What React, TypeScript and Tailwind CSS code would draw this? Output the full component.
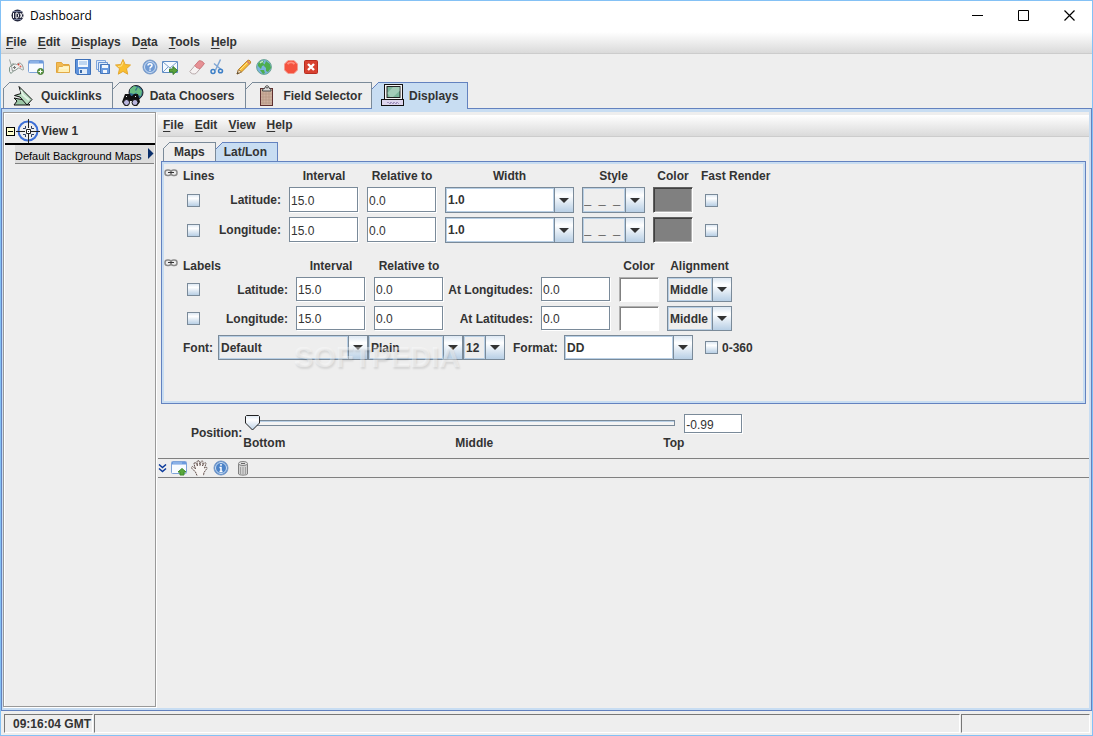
import { useState, type ReactNode } from 'react'
import clsx from 'clsx'

const font = "font-['Liberation_Sans',Arial,sans-serif]"

/* Menus */

function MenuBar({ items }: { items: [string, number][] }) {
  return (
    <nav className="flex h-[22px] items-center gap-[11px] border-b border-[#cccccc] bg-linear-to-b from-white to-[#dadada] px-[5px] pb-[2px]">
      {items.map(([label, key]) => (
        <button key={label} type="button" className="leading-4">
          {label.slice(0, key)}
          <span className="underline underline-offset-2">{label[key]}</span>
          {label.slice(key + 1)}
        </button>
      ))}
    </nav>
  )
}

/* Tabs */

interface TabProps {
  label: string
  selected?: boolean
  icon?: ReactNode
  className?: string
  onClick?: () => void
}

function Tab({ label, selected, icon, className, onClick }: TabProps) {
  return (
    <button
      type="button"
      role="tab"
      aria-selected={!!selected}
      onClick={onClick}
      className={clsx(
        'relative flex items-center border-t border-r first:border-l [&:first-child>svg:first-child]:-left-px',
        selected ? '-mb-px border-[#6382bf] bg-[#c8ddf2] pb-px' : 'border-[#7a8a99] bg-[#eeeeee]',
        className,
      )}
    >
      <svg className="absolute -top-px left-0" width="7" height="7" viewBox="0 0 7 7">
        <path d="M0 0H7L0 7Z" fill="#eeeeee" />
        <path d="M0 7L7 0" stroke={selected ? '#6382bf' : '#7a8a99'} />
      </svg>
      {icon}
      {label}
    </button>
  )
}

/* Form controls */

function Field({ label, value, className = 'w-[69px] h-[calc(100%-1px)]' }: { label: string; value: string; className?: string }) {
  return (
    <input
      aria-label={label}
      defaultValue={value}
      className={clsx(
        'self-start border border-[#7a8a99] bg-white px-px pt-[2px] font-normal text-[#333333] shadow-[1px_1px_0_#ffffff] outline-none',
        className,
      )}
    />
  )
}

interface ComboProps {
  label: string
  value: string
  className?: string
  white?: boolean
  dashes?: boolean
}

function Combo({ label, value, className, white, dashes }: ComboProps) {
  return (
    <div className={clsx('flex h-full border border-[#7a8a99]', white ? 'bg-white' : 'bg-[#eeeeee]', className)}>
      <select
        aria-label={label}
        className={clsx(
          'min-w-0 flex-1 appearance-none border border-[#b8cfe5] outline-none',
          dashes ? 'text-[13px] text-black' : 'pl-px',
        )}
        defaultValue={value}
      >
        <option>{value}</option>
      </select>
      <span className="pointer-events-none flex w-[19px] items-center justify-center border-l border-[#7a8a99] bg-linear-to-b from-[#dde8f3] via-white via-30% to-[#b8cfe5]">
        <svg width="10" height="5" viewBox="0 0 10 5">
          <path d="M0 0H10L5 5Z" fill="#333333" />
        </svg>
      </span>
    </div>
  )
}

function Check({ label }: { label: string }) {
  return (
    <input
      type="checkbox"
      aria-label={label}
      className="h-[13px] w-[13px] appearance-none border border-[#7a8a99] bg-linear-to-b from-[#dde8f3] via-white via-30% to-[#b8cfe5] checked:bg-[#6382bf]"
    />
  )
}

function Swatch({ label, dark }: { label: string; dark?: boolean }) {
  return (
    <button
      type="button"
      aria-label={label}
      className={clsx(
        'h-full w-10 border',
        dark
          ? 'border-t-[#606060] border-l-[#606060] border-r-white border-b-white bg-[#808080] shadow-[inset_1px_1px_0_#404040,inset_-1px_-1px_0_#b0b0b0]'
          : 'border-t-[#b0b0b0] border-l-[#b0b0b0] border-r-white border-b-white bg-white shadow-[inset_1px_1px_0_#808080]',
      )}
    />
  )
}

/* Icons */

function Icon({ children, size = 16 }: { children: ReactNode; size?: number }) {
  return (
    <svg className="shrink-0" width={size} height={size} viewBox={`0 0 ${size} ${size}`} fill="none">
      {children}
    </svg>
  )
}

const AppLogo = () => (
  <Icon size={13}>
    <circle cx="6.5" cy="6.5" r="6" fill="#25283d" />
    <path d="M2 2.500h9M2.500 10.500h8" stroke="#6f7896" />
    <path d="M2.500 4v5M5 4v5h1.500l1-1.500v-2L6.500 4ZM9 4l2.500 5M11.500 4L9 9" stroke="#fff" />
  </Icon>
)

const BrushIcon = () => (
  <Icon>
    <path d="M1.500.5l2 6.500" stroke="#9aa39f" />
    <path d="M5.500 4L1.500 8.500v4L3 14.500l3-3" stroke="#7d9487" />
    <path d="M3.500 7.500C5 5 7 4.500 8.500 5.500L11 4c3 0 4 3 4.500 6.500-1 1.500-3-1.500-5-1.500L7 11.500 4.500 12C3.800 10 4 9 3.500 7.500Z" stroke="#8f9894" fill="#edf0ee" />
    <path d="M6.500 7v3M5 8.500h3" stroke="#777" />
    <circle cx="10.500" cy="5.500" r="1" fill="#d94337" />
    <circle cx="12.500" cy="7.500" r="1" fill="#e16257" />
  </Icon>
)

const WindowIcon = ({ arrow }: { arrow?: boolean }) => (
  <Icon>
    <rect x=".5" y="1.500" width="15" height="12" rx="1" fill="#f7fbff" stroke="#7ea3d8" />
    <path d="M1 2h14v2.500H1z" fill="#6b9ade" />
    <path d="M2 3h9" stroke="#a9c8f0" />
    {arrow ? (
      <path d="M11 8.500l4 3.500h-2v3H9v-3H7Z" fill="#58a83b" stroke="#3c8a2b" />
    ) : (
      <>
        <circle cx="12.500" cy="12.500" r="3" fill="#5d9a43" stroke="#4b7d3b" />
        <path d="M12.500 10.500v4M10.500 12.500h4" stroke="#fff" />
      </>
    )}
  </Icon>
)

const FolderIcon = () => (
  <Icon>
    <path d="M1.500 13.500v-10h5l1.500 2h6v8Z" fill="#f3ba52" stroke="#e2a53b" />
    <path d="M3.500 7.500h4l1-1h6v7h-12Z" fill="#fff0b5" stroke="#e2aa47" />
    <path d="M4.500 9h9" stroke="#fff9dc" />
  </Icon>
)

const SaveIcon = () => (
  <Icon>
    <path d="M.5.5h15v15H2L.5 14Z" fill="#5f93dc" stroke="#3d70b8" />
    <path d="M3 1h10v7H3z" fill="#f4f8fd" />
    <path d="M4 3h8M4 5h8" stroke="#8bb4e4" />
    <path d="M4 10h8v5H4z" fill="#e1ecf8" />
    <path d="M5 11h2v3H5z" fill="#3969a8" />
  </Icon>
)

const SaveAllIcon = () => (
  <Icon>
    <path d="M1.500 1.500h9v9h-9z" fill="#dceafb" stroke="#7fa6dd" />
    <path d="M3.500 3.500h9v9h-9z" fill="#dceafb" stroke="#6a95d2" />
    <path d="M5.500 5.500h9v9h-9z" fill="#6a9bdf" stroke="#4577bc" />
    <path d="M7 6h6v3H7zM8 11h4v3H8z" fill="#f2f7fd" />
  </Icon>
)

const StarIcon = () => (
  <Icon>
    <path d="M8 .5l2.200 5 5.300.5-4 3.700 1.200 5.500L8 12.400l-4.700 2.800 1.200-5.500L.5 6l5.300-.5Z" fill="#f9bf30" stroke="#e3a733" />
    <path d="M8 3L6.500 7l-3.500.500" stroke="#ffe28a" />
  </Icon>
)

const RoundIcon = ({ kind }: { kind: 'help' | 'info' }) => (
  <Icon>
    <circle cx="8" cy="8" r="7" fill={kind === 'help' ? '#6f9ad4' : '#4c83c8'} stroke="#7c9cc8" />
    <circle cx="8" cy="8" r="5.500" stroke="#d0e0f3" />
    {kind === 'help' ? (
      <path d="M6 6.500C6 4 10 4.200 10 6.300 10 8 8 7.800 8 9.500M8 10.500v1.300" stroke="#fff" strokeWidth="1.500" />
    ) : (
      <path d="M8 4v1.700M6.500 7.500H8v4M6.500 11.500h3" stroke="#fff" strokeWidth="1.500" />
    )}
  </Icon>
)

const MailIcon = () => (
  <Icon>
    <path d="M.5 2.500h15v11H.5z" fill="#f5faff" stroke="#5f8cc4" />
    <path d="M1 3l7 6 7-6M1 13l5-5M15 13l-5-5" stroke="#7ba0cc" />
    <path d="M7.500 10h3.500V7.500l4.500 4-4.500 4V13H7.500Z" fill="#5aa23c" stroke="#3b812a" />
  </Icon>
)

const EraserIcon = () => (
  <Icon>
    <path d="M.8 12.500L9.500 2.300c1-1.200 5 .3 5.700 2.500L7 14.500c-2 1-5 .5-6.200-2Z" fill="#f6f2f2" stroke="#b7a9aa" />
    <path d="M5.800 6.600L9.500 2.300c1-1.200 5 .3 5.700 2.500L11 9.700C9 9.500 7 8.500 5.800 6.600Z" fill="#e69195" stroke="#d2797e" />
  </Icon>
)

const ScissorsIcon = () => (
  <Icon>
    <path d="M11.500.5L6.500 11M5 4.500l7 6" stroke="#7fa6d4" strokeWidth="1.500" />
    <circle cx="4" cy="12.500" r="2" stroke="#3c7fc7" strokeWidth="1.500" />
    <ellipse cx="11.500" cy="12" rx="2" ry="1.800" stroke="#3c7fc7" strokeWidth="1.500" />
  </Icon>
)

const PencilIcon = () => (
  <Icon>
    <path d="M1 15l1.500-4.500L11.800 1.300c1.500-.8 3.500 1.200 2.700 2.700L5.500 13Z" fill="#f8bc35" stroke="#bd852b" />
    <path d="M4 11L12 3" stroke="#ffe38c" />
    <path d="M2.500 10.500L5.500 13 1 15Z" fill="#f4e1bf" stroke="#9e7b4c" />
    <path d="M1 15l.700-2 1.300 1.200Z" fill="#333" />
    <path d="M11 2l3 3" stroke="#ce7970" strokeWidth="1.500" />
  </Icon>
)

const GlobeIcon = () => (
  <Icon>
    <circle cx="8" cy="8" r="7.400" fill="#7ab3de" stroke="#6aa593" />
    <path d="M2 5c1-3 5-4 6-3L7 4l2 2-3 1-1 3-3-3ZM10 2l4 3 1 4-3 4-2-1V9L8 7ZM4 11l4 0 1 3-2 1Z" fill="#4dae4d" />
    <path d="M4 4c1-1 2-1.500 3-1.500" stroke="#c4e9c8" strokeWidth="1.500" />
  </Icon>
)

const StopIcon = () => (
  <Icon>
    <path d="M5 1.500h6L14.500 5v6L11 14.500H5L1.500 11V5Z" fill="#f4523e" stroke="#f39a8e" />
    <path d="M4.500 5c2-2 5-2 7 0" stroke="#ff8d7c" strokeWidth="2" />
  </Icon>
)

const ExitIcon = () => (
  <Icon>
    <rect x="1.500" y="1.500" width="13" height="13" rx="1" fill="#d84130" stroke="#b72d20" />
    <path d="M5 5l6 6M11 5l-6 6" stroke="#fff" strokeWidth="2.400" />
  </Icon>
)

const ChainIcon = () => (
  <svg width="14" height="8" viewBox="0 0 14 8" fill="none">
    <rect x="1" y="1" width="6" height="5.500" rx="2.500" stroke="#8a8a8a" strokeWidth="1.500" />
    <rect x="7" y="1" width="6" height="5.500" rx="2.500" stroke="#8a8a8a" strokeWidth="1.500" />
    <path d="M4 3.500h6" stroke="#333" />
  </svg>
)

const QuicklinksIcon = () => (
  <svg width="20" height="22" viewBox="0 0 20 22">
    <path d="M1 20l3-4-3-3 10 2 6 5Z" fill="#9bc6a5" stroke="#111" />
    <path d="M6 1.500L19 14.500 14 20 7 12 1.500 10.500 8 8.500Z" fill="#b8dcc0" stroke="#111" />
    <path d="M8 5l2 5 6 5" fill="none" stroke="#e4f3e7" strokeWidth="2" />
  </svg>
)

const BinocularsIcon = () => (
  <svg width="22" height="22" viewBox="0 0 22 22">
    <circle cx="14" cy="7.500" r="7" fill="#2f6a8f" stroke="#222" />
    <path d="M8 4l4-3 3 1-2 3 2 2-3 2-4-1ZM16 2l4 4-1 5-4-1-1-4Z" fill="#69bd82" />
    <path d="M3 9h5l1 2h1l2-2h4l2 8-3 4h-3l-2-5h-2l-2 5H3l-3-4Z" fill="#111" />
    <circle cx="4.500" cy="17.500" r="3" fill="#bbb7df" stroke="#111" />
    <circle cx="13" cy="17.500" r="3" fill="#bbb7df" stroke="#111" />
    <path d="M4 11l1 1M13 11l1 1" stroke="#eee" />
  </svg>
)

const ClipboardIcon = () => (
  <svg width="14" height="22" viewBox="0 0 14 22">
    <rect x=".5" y="3.500" width="12" height="17" fill="#cdb09e" stroke="#5f3030" />
    <path d="M3 7v12M6 7v12M9 7v12M1 9h11M1 12h11M1 15h11M1 18h11" stroke="#b39381" strokeWidth=".600" />
    <path d="M2.500 6V4.500L5 3c0-3 4-3 4 0l2 1.500V6Z" fill="#ddd" stroke="#444" />
    <circle cx="7" cy="2.700" r=".8" fill="#333" />
  </svg>
)

const ComputerIcon = () => (
  <svg width="24" height="23" viewBox="0 0 24 23">
    <rect x="3.500" y=".5" width="18" height="15" fill="#f4f4f4" stroke="#111" />
    <rect x="6" y="2.500" width="13" height="11" fill="#7db79c" stroke="#222" />
    <path d="M6.500 9L12 3h6.500v4L12 13H9Z" fill="#a3cdb8" />
    <rect x=".5" y="15.500" width="22" height="6" fill="#ddd6ee" stroke="#111" />
    <path d="M6 18.500h11M8 19.500h10" stroke="#a295c0" strokeDasharray="2 1" />
  </svg>
)

const TargetIcon = () => (
  <svg className="ml-px" width="24" height="24" viewBox="0 0 24 24" fill="none">
    <circle cx="12" cy="12" r="9.500" stroke="#3d6fd6" strokeWidth="2" />
    <path d="M12.500 0v9M12.500 15v9M0 12.500h9M15 12.500h9" stroke="#222" />
    <path d="M7 9.500h2.500V7M15.500 7v2.500H18M18 15.500h-2.500V18M9.500 18v-2.500H7" stroke="#2c3f66" />
    <path d="M10.500 10.500h4v4h-4z" fill="#fff" stroke="#222" />
    <path d="M12 12h1v1h-1z" fill="#222" />
  </svg>
)

const HandIcon = () => (
  <svg width="17" height="16" viewBox="0 0 17 16" fill="none">
    <path
      d="M6 15.500L4.500 12 .7 8.200C0 6.500 2 6 3 7.500L4.500 9 3 4c0-2 2-2 2.300-.3L6.500 6 6 2c.300-2 2-2 2.400 0L9 5.500 10 1.800c.5-1.500 2.300-1 2 .700L11.500 6l1.500-2.800c1-1.200 2.500-.3 1.800 1L13.500 8l1-.5c1.500-.5 2 .5 1 1.500L13 12.500l-.5 3"
      fill="#f8f5f3"
      stroke="#62504c"
      strokeDasharray="2 .500"
    />
  </svg>
)

const TrashIcon = () => (
  <Icon>
    <path d="M3.500 4v10c1 1.500 8 1.500 9 0V4" fill="#d0d0d0" stroke="#808080" />
    <ellipse cx="8" cy="3.500" rx="4.500" ry="2" fill="#e5e5e5" stroke="#808080" />
    <path d="M5.500 7v7M8 7v7M10.500 7v7" stroke="#a0a0a0" />
    <path d="M6 3.500h4" stroke="#666" />
  </Icon>
)

const toolGroups: [string, () => ReactNode][][] = [
  [['Dashboard', BrushIcon], ['New view', WindowIcon]],
  [['Open', FolderIcon], ['Save', SaveIcon], ['Save as', SaveAllIcon], ['Favorites', StarIcon]],
  [['Help', () => <RoundIcon kind="help" />], ['Support', MailIcon]],
  [['Remove all', EraserIcon], ['Cut', ScissorsIcon]],
  [['Edit', PencilIcon], ['Globe', GlobeIcon]],
  [['Stop', StopIcon], ['Exit', ExitIcon]],
]

const mainTabs = [
  { label: 'Quicklinks', icon: <QuicklinksIcon />, className: 'gap-2 pl-[9px] pr-[10px]' },
  { label: 'Data Choosers', icon: <BinocularsIcon />, className: 'gap-[6px] pl-[9px] pr-[11px]' },
  { label: 'Field Selector', icon: <ClipboardIcon />, className: 'gap-[9px] pl-[14px] pr-[9px]' },
  { label: 'Displays', icon: <ComputerIcon />, className: 'gap-1 pl-[9px] pr-[9px]' },
]

/* Lat/Lon panel */

function LinesGrid() {
  return (
    <div className="grid auto-rows-[26px] grid-cols-[98px_70px_70px_129px_63px_40px_auto] items-center gap-x-2 gap-y-1">
      <div className="col-span-7 -mb-px grid h-4 grid-cols-subgrid self-end text-center">
        <span className="text-left">Lines</span>
        <span>Interval</span>
        <span>Relative to</span>
        <span>Width</span>
        <span>Style</span>
        <span>Color</span>
        <span className="text-left">Fast Render</span>
      </div>
      {['Latitude', 'Longitude'].map((name) => (
        <div key={name} className="col-span-7 grid h-[26px] grid-cols-subgrid items-center">
          <label className="flex items-center justify-between pl-1">
            <Check label={`${name} lines`} />
            {name}:
          </label>
          <Field label={`${name} interval`} value="15.0" />
          <Field label={`${name} relative to`} value="0.0" />
          <Combo label={`${name} width`} value="1.0" white />
          <Combo label={`${name} style`} value={'_\u00a0\u00a0_\u00a0\u00a0_'} dashes />
          <Swatch label={`${name} color`} dark />
          <span className="flex pl-1">
            <Check label={`${name} fast render`} />
          </span>
        </div>
      ))}
    </div>
  )
}

function LabelsGrid() {
  return (
    <div className="grid grid-cols-[105px_70px_70px_81px_70px_40px_65px] justify-start gap-x-2 gap-y-1">
      <div className="col-span-7 grid h-[15px] grid-cols-subgrid text-center">
        <span className="text-left">Labels</span>
        <span>Interval</span>
        <span>Relative to</span>
        <span className="col-start-6">Color</span>
        <span>Alignment</span>
      </div>
      {[
        ['Latitude', 'Longitudes'],
        ['Longitude', 'Latitudes'],
      ].map(([name, at]) => (
        <div key={name} className="col-span-7 grid h-[25px] grid-cols-subgrid items-center">
          <label className="flex items-center justify-between pl-1">
            <Check label={`${name} labels`} />
            {name}:
          </label>
          <Field label={`${name} label interval`} value="15.0" />
          <Field label={`${name} label relative to`} value="0.0" />
          <span className="flex justify-end whitespace-nowrap">At {at}:</span>
          <Field label={`At ${at}`} value="0.0" />
          <Swatch label={`${name} label color`} />
          <Combo label={`${name} alignment`} value="Middle" />
        </div>
      ))}
    </div>
  )
}

function LatLonPanel() {
  return (
    <div className="relative mr-[3px] h-[243px] border border-[#6382bf]">
      <div className="h-full border-2 border-[#c8ddf2] pt-[3px]">
        <div className="flex items-start gap-[5px]">
          <span className="pt-[2px]"><ChainIcon /></span>
          <div className="-mt-[10px] flex-1"><LinesGrid /></div>
        </div>
        <div className="mt-[15px] flex items-start gap-[5px]">
          <span className="pt-px"><ChainIcon /></span>
          <div className="flex-1">
            <LabelsGrid />
            <div className="mt-1 flex h-[25px] items-center">
              <span className="w-[35px]">Font:</span>
              <Combo label="Font" value="Default" className="w-[150px]" />
              <Combo label="Font style" value="Plain" className="w-[95px]" />
              <Combo label="Font size" value="12" className="w-[42px]" />
              <span className="w-[51px] pl-2">Format:</span>
              <Combo label="Format" value="DD" className="ml-2 w-[129px]" white />
              <label className="ml-3 flex items-center gap-1">
                <Check label="0-360" />
                0-360
              </label>
            </div>
          </div>
        </div>
      </div>
      <div className="pointer-events-none absolute top-[179px] left-[132px] text-[29px] leading-8 text-white/40 [text-shadow:1px_2px_2px_rgb(0_0_0/0.1)]">
        SOFTPEDIA
      </div>
    </div>
  )
}

function PositionSlider() {
  const [position, setPosition] = useState(-0.99)
  return (
    <div className="flex h-[54px] items-start pt-[10px] pl-[33px]">
      <span className="pt-[11px]">Position:</span>
      <div className="ml-px w-[441px]">
        <div className="relative mx-[9px] h-[21px]">
          <div className="absolute inset-x-0 top-[6px] h-[6px] border border-[#7a8a99] bg-[#f4f4f4] shadow-[inset_0_1px_0_#b8cfe5]" />
          <svg
            className="absolute top-px -ml-[7px]"
            style={{ left: `${((position + 0.99) / 1.98) * 100}%` }}
            width="15"
            height="16"
            viewBox="0 0 15 16"
          >
            <defs>
              <linearGradient id="thumb" x1="0" y1="0" x2="0" y2="1">
                <stop stopColor="#dde8f3" />
                <stop offset=".3" stopColor="#fff" />
                <stop offset="1" stopColor="#b8cfe5" />
              </linearGradient>
            </defs>
            <path d="M1.500.500h12l1 1V8l-7 7-7-7V1.500Z" fill="url(#thumb)" stroke="#222" />
          </svg>
          <input
            type="range"
            aria-label="Position"
            min={-0.99}
            max={0.99}
            step={0.01}
            value={position}
            onChange={(e) => setPosition(Number(e.target.value))}
            className="absolute inset-0 w-full opacity-0"
          />
        </div>
        <div className="flex justify-between">
          <span>Bottom</span>
          <span>Middle</span>
          <span>Top</span>
        </div>
      </div>
      <Field key={position} label="Position value" value={position.toFixed(2)} className="h-[19px] w-[58px]" />
    </div>
  )
}

function ViewTree() {
  return (
    <aside className="mr-[2px] w-[153px] shrink-0 border border-[#999999] pt-[6px] pl-px shadow-[1px_1px_0_#fff,inset_1px_1px_0_#fff]">
      <div className="flex h-[26px] items-center border-b-2 border-black">
        <button type="button" aria-label="Collapse" className="ml-px h-[9px] w-[9px] border border-black bg-[#ffffcc]">
          <span className="mx-px block h-px bg-black" />
        </button>
        <TargetIcon />
        <span className="pl-px">View 1</span>
      </div>
      <button
        type="button"
        className="ml-[10px] flex h-[19px] w-[139px] items-center justify-between border-b border-[#808080] bg-[#dcdcdc] pt-[3px] text-[11px] font-normal whitespace-nowrap text-black"
      >
        Default Background Maps
        <svg className="mb-1" width="6" height="11" viewBox="0 0 6 11">
          <path d="M0 0L5.500 5.500 0 11Z" fill="#0a2f6b" />
        </svg>
      </button>
    </aside>
  )
}

export default function App() {
  const [tab, setTab] = useState('Displays')

  return (
    <div className={clsx('flex min-h-screen flex-col border border-[#84c1f5] bg-[#eeeeee] text-xs leading-4 font-bold text-[#333333]', font)}>
      {/* Title bar */}
      <header className="flex h-[31px] items-center bg-white pb-[2px] pl-[10px] text-black">
        <AppLogo />
        <h1 className="flex-1 pl-[6px] font-['Open_Sans','Noto_Sans',sans-serif] font-normal">Dashboard</h1>
        <button type="button" aria-label="Minimize" className="flex w-[45px] justify-center">
          <Icon size={11}><path d="M0 5.500h11" stroke="#000" /></Icon>
        </button>
        <button type="button" aria-label="Maximize" className="flex w-[46px] justify-center">
          <Icon size={11}><path d="M.5.5h10v10H.5z" stroke="#000" /></Icon>
        </button>
        <button type="button" aria-label="Close" className="flex w-[46px] justify-center">
          <Icon size={11}><path d="M.5.5l10 10M10.500.5l-10 10" stroke="#000" strokeWidth="1.200" /></Icon>
        </button>
      </header>

      <MenuBar items={[['File', 0], ['Edit', 0], ['Displays', 0], ['Data', 1], ['Tools', 0], ['Help', 0]]} />

      {/* Toolbar */}
      <div role="toolbar" className="flex h-7 items-center gap-[11px] pb-[3px] pl-[7px]">
        {toolGroups.map((group) => (
          <div key={group[0][0]} className="flex gap-1">
            {group.map(([label, Glyph]) => (
              <button key={label} type="button" aria-label={label} title={label}>
                <Glyph />
              </button>
            ))}
          </div>
        ))}
      </div>

      <div role="tablist" className="flex h-[26px] pl-[2px]">
        {mainTabs.map((t) => (
          <Tab key={t.label} {...t} selected={tab === t.label} onClick={() => setTab(t.label)} />
        ))}
      </div>

      {/* Workspace */}
      <main className="flex flex-1 flex-col border border-[#6382bf]">
        <div className="flex flex-1 border-t-3 border-r-2 border-b-2 border-l border-[#c8ddf2] pb-px">
          <ViewTree />
          <section className="flex min-w-0 flex-1 flex-col">
            <div className="pt-[3px]">
              <MenuBar items={[['File', 0], ['Edit', 0], ['View', 0], ['Help', 0]]} />
            </div>
            <div className="pt-[5px] pl-[3px]">
              <div role="tablist" className="flex h-[19px] pl-[2px]">
                <Tab label="Maps" className="px-[10px]" />
                <Tab label="Lat/Lon" className="pr-[10px] pl-2" selected />
              </div>
              <LatLonPanel />
            </div>
            <PositionSlider />
            <div className="flex h-5 items-center border-y border-[#808080]">
              <button type="button" aria-label="Collapse panel">
                <svg width="9" height="9" viewBox="0 0 9 9" fill="none">
                  <path d="M1 .5l3.500 3L8 .5M1 4.500l3.500 3 3.500-3" stroke="#0b3a9b" strokeWidth="1.500" />
                </svg>
              </button>
              <button type="button" aria-label="New display" className="ml-1"><WindowIcon arrow /></button>
              <button type="button" aria-label="Pan" className="ml-1"><HandIcon /></button>
              <button type="button" aria-label="Details" className="ml-[5px]"><RoundIcon kind="info" /></button>
              <button type="button" aria-label="Delete" className="ml-[6px]"><TrashIcon /></button>
            </div>
          </section>
        </div>
      </main>

      {/* Status bar */}
      <footer className="flex gap-px pt-[3px] pr-[2px] pb-[2px] pl-[3px]">
        <div className="h-[19px] w-[89px] border border-t-[#777777] border-r-white border-b-white border-l-[#777777] pt-px pl-2 whitespace-nowrap">
          09:16:04 GMT
        </div>
        <div className="flex-1 border border-t-[#777777] border-r-white border-b-white border-l-[#777777]" />
        <div className="w-[129px] border border-t-[#777777] border-r-white border-b-white border-l-[#777777]" />
      </footer>
    </div>
  )
}
